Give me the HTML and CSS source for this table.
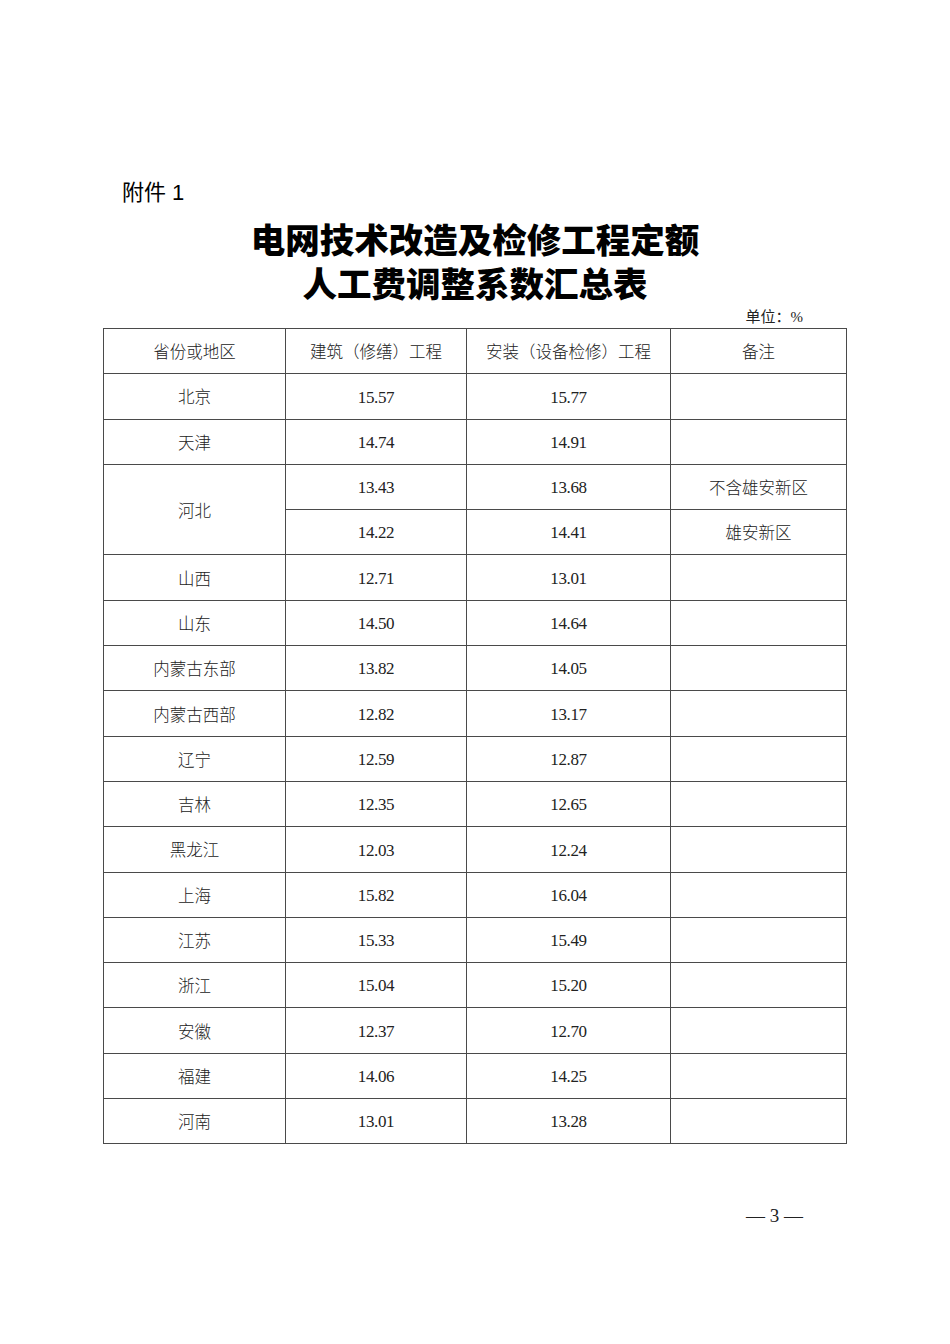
FILE: index.html
```html
<!DOCTYPE html>
<html lang="zh-CN">
<head>
<meta charset="utf-8">
<title>电网技术改造及检修工程定额人工费调整系数汇总表</title>
<link rel="stylesheet" href="styles.css">
</head>
<body>
<div class="page">
  <div class="attach">附件 1</div>
  <h1 class="title"><span class="tline">电网技术改造及检修工程定额</span><span class="tline">人工费调整系数汇总表</span></h1>
  <div class="unit">单位：%</div>
  <table class="sheet">
    <colgroup>
      <col class="c1"><col class="c2"><col class="c3"><col class="c4">
    </colgroup>
    <thead>
      <tr><th>省份或地区</th><th>建筑（修缮）工程</th><th>安装（设备检修）工程</th><th>备注</th></tr>
    </thead>
    <tbody>
      <tr><td>北京</td><td class="n">15.57</td><td class="n">15.77</td><td></td></tr>
      <tr><td>天津</td><td class="n">14.74</td><td class="n">14.91</td><td></td></tr>
      <tr><td rowspan="2">河北</td><td class="n">13.43</td><td class="n">13.68</td><td>不含雄安新区</td></tr>
      <tr><td class="n">14.22</td><td class="n">14.41</td><td>雄安新区</td></tr>
      <tr><td>山西</td><td class="n">12.71</td><td class="n">13.01</td><td></td></tr>
      <tr><td>山东</td><td class="n">14.50</td><td class="n">14.64</td><td></td></tr>
      <tr><td>内蒙古东部</td><td class="n">13.82</td><td class="n">14.05</td><td></td></tr>
      <tr><td>内蒙古西部</td><td class="n">12.82</td><td class="n">13.17</td><td></td></tr>
      <tr><td>辽宁</td><td class="n">12.59</td><td class="n">12.87</td><td></td></tr>
      <tr><td>吉林</td><td class="n">12.35</td><td class="n">12.65</td><td></td></tr>
      <tr><td>黑龙江</td><td class="n">12.03</td><td class="n">12.24</td><td></td></tr>
      <tr><td>上海</td><td class="n">15.82</td><td class="n">16.04</td><td></td></tr>
      <tr><td>江苏</td><td class="n">15.33</td><td class="n">15.49</td><td></td></tr>
      <tr><td>浙江</td><td class="n">15.04</td><td class="n">15.20</td><td></td></tr>
      <tr><td>安徽</td><td class="n">12.37</td><td class="n">12.70</td><td></td></tr>
      <tr><td>福建</td><td class="n">14.06</td><td class="n">14.25</td><td></td></tr>
      <tr><td>河南</td><td class="n">13.01</td><td class="n">13.28</td><td></td></tr>
    </tbody>
  </table>
  <div class="pageno">— 3 —</div>
</div>
</body>
</html>
```
FILE: styles.css
```css
html, body {
  margin: 0;
  padding: 0;
  background: #ffffff;
}
.page {
  width: 950px;
  height: 1344px;
  overflow: hidden;
  color: #111;
  font-family: "Liberation Serif", "Noto Sans CJK SC", serif;
}
.attach {
  margin-top: 178px;
  padding-left: 122px;
  font-family: "Liberation Sans", "Noto Sans CJK SC", sans-serif;
  font-size: 22px;
  line-height: 30px;
  color: #000;
}
.title {
  margin: 11px 0 0;
  display: flex;
  flex-direction: column;
  align-items: center;
  font-family: "Liberation Serif", "Noto Sans CJK SC", serif;
  font-weight: 900;
  font-size: 34.5px;
  color: #000;
}
.tline {
  display: block;
  height: 44px;
  line-height: 44px;
  white-space: nowrap;
}
.unit {
  text-align: right;
  padding-right: 147px;
  font-size: 15px;
  line-height: 20px;
  color: #222;
}
.sheet {
  margin: 1px 0 0 103px;
  width: 743px;
  border-collapse: collapse;
  table-layout: fixed;
  color: #222;
}
.c1 { width: 182px; }
.c2 { width: 181px; }
.c3 { width: 204px; }
.c4 { width: 176px; }
.sheet tr {
  height: 45.3px;
}
.sheet th,
.sheet td {
  border: 1px solid #4a4a4a;
  padding: 0;
  text-align: center;
  vertical-align: middle;
  font-weight: 300;
  font-family: "Noto Sans CJK SC", serif;
  font-size: 16.5px;
  line-height: 24px;
}
.sheet td.n {
  font-family: "Liberation Serif", serif;
  font-weight: normal;
  font-size: 17px;
  letter-spacing: -0.4px;
  line-height: 28px;
  vertical-align: bottom;
  padding-bottom: 7px;
}
.pageno {
  margin-top: 60px;
  text-align: right;
  padding-right: 147px;
  font-size: 19px;
  line-height: 24px;
  color: #222;
}
```
